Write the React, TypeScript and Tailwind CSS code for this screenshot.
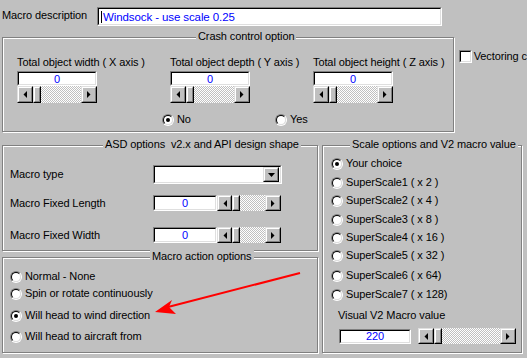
import React from "react";

const Sunken = ({ className, children }: { className: string; children?: React.ReactNode }) => (
  <div className={`border border-t-[#808080] border-l-[#808080] border-b-white border-r-white ${className}`}>
    <div className="h-full w-full border border-t-black border-l-black border-b-[#dfdfdf] border-r-[#dfdfdf] bg-white flex items-center overflow-hidden">
      {children}
    </div>
  </div>
);

const Raised = ({ className, children }: { className: string; children?: React.ReactNode }) => (
  <div className={`border border-t-[#dfdfdf] border-l-[#dfdfdf] border-b-black border-r-black ${className}`}>
    <div className="h-full w-full border border-t-white border-l-white border-b-[#808080] border-r-[#808080] bg-[#c0c0c0] flex items-center justify-center">
      {children}
    </div>
  </div>
);

const Tri = ({ dir }: { dir: "l" | "r" | "d" }) => {
  if (dir === "l")
    return (
      <svg width="4" height="7" viewBox="0 0 4 7">
        <polygon points="4,0 4,7 0.5,3.5" fill="#000" />
      </svg>
    );
  if (dir === "r")
    return (
      <svg width="4" height="7" viewBox="0 0 4 7">
        <polygon points="0,0 0,7 3.5,3.5" fill="#000" />
      </svg>
    );
  return (
    <svg width="7" height="4" viewBox="0 0 7 4">
      <polygon points="0,0 7,0 3.5,4" fill="#000" />
    </svg>
  );
};

const Scroll = ({ className, lw, rw }: { className: string; lw: string; rw: string }) => (
  <div className={`flex ${className}`}>
    <Raised className={`${lw} h-full`}>
      <Tri dir="l" />
    </Raised>
    <Raised className="w-[8px] h-full" />
    <div className="flex-1 h-full bg-[image:repeating-conic-gradient(#c0c0c0_0_25%,#ffffff_0_50%)] bg-[length:2px_2px]" />
    <Raised className={`${rw} h-full`}>
      <Tri dir="r" />
    </Raised>
  </div>
);

const Radio = ({ checked, label }: { checked?: boolean; label: string }) => (
  <div className="flex items-center h-[13px]">
    <div className="w-[12px] h-[12px] rounded-full border border-t-[#808080] border-l-[#808080] border-b-white border-r-white shrink-0">
      <div className="w-full h-full rounded-full border border-t-black border-l-black border-b-[#dfdfdf] border-r-[#dfdfdf] bg-white flex items-center justify-center">
        {checked && <div className="w-[4px] h-[4px] rounded-full bg-black" />}
      </div>
    </div>
    <span className="ml-[3px] whitespace-nowrap leading-[13px]">{label}</span>
  </div>
);

const Frame = ({
  className,
  title,
  titleLeft,
  children,
}: {
  className: string;
  title: string;
  titleLeft: string;
  children?: React.ReactNode;
}) => (
  <div className={`relative border border-[#808080] shadow-[inset_1px_1px_0_#fff,1px_1px_0_#fff] ${className}`}>
    <span className={`absolute top-[-8px] ${titleLeft} bg-[#c0c0c0] px-[2px] leading-[13px] whitespace-pre`}>{title}</span>
    {children}
  </div>
);

const Value = ({ className, v }: { className: string; v: string }) => (
  <Sunken className={className}>
    <span className="w-full text-center text-[#0000ff] leading-[12px]">{v}</span>
  </Sunken>
);

const AxisCol = ({ label, w }: { label: string; w: string }) => (
  <div className={`flex flex-col ${w}`}>
    <span className="leading-[13px] whitespace-nowrap">{label}</span>
    <Value className="mt-[2px] w-[80px] h-[15px]" v="0" />
    <Scroll className="w-[80px] h-[17px]" lw="w-[16px]" rw="w-[16px]" />
  </div>
);

export default function App() {
  return (
    <div
      className="relative w-[527px] h-[358px] bg-[#c0c0c0] overflow-hidden pt-[7px] text-[11px] tracking-[-0.1px] text-black"
      style={{ fontFamily: '"Liberation Sans", Arial, sans-serif' }}
    >
      {/* Row 1 */}
      <div className="flex items-start h-[19px]">
        <span className="ml-[2px] w-[95px] mt-[2px] leading-[13px]">Macro description</span>
        <Sunken className="w-[345px] h-[19px]">
          <div className="w-[1px] h-[12px] bg-black ml-[2px]" />
          <span className="ml-[1px] text-[#0000ff] text-[11.5px] leading-[14px] whitespace-nowrap">Windsock - use scale 0.25</span>
        </Sunken>
      </div>

      {/* Row 2 */}
      <div className="flex mt-[11px]">
        <Frame className="ml-[2px] w-[452px] h-[95px]" title="Crash control option" titleLeft="left-[193px]">
          <div className="pl-[14px] pt-[18px] flex">
            <AxisCol label="Total object width ( X axis )" w="w-[153px]" />
            <AxisCol label="Total object depth ( Y axis )" w="w-[143px]" />
            <AxisCol label="Total object height ( Z axis )" w="w-[120px]" />
          </div>
          <div className="flex mt-[10px] pl-[159px]">
            <div className="w-[113px]">
              <Radio checked label="No" />
            </div>
            <Radio label="Yes" />
          </div>
        </Frame>
        <div className="ml-[5px] mt-[13px] flex items-center h-[13px]">
          <div className="w-[13px] h-[13px] border border-t-[#808080] border-l-[#808080] border-b-white border-r-white shrink-0">
            <div className="w-full h-full border border-t-black border-l-black border-b-[#dfdfdf] border-r-[#dfdfdf] bg-white" />
          </div>
          <span className="ml-[2px] whitespace-nowrap leading-[13px]">Vectoring c</span>
        </div>
      </div>

      {/* Row 3 */}
      <div className="flex items-start mt-[13px]">
        <div className="ml-[2px] w-[316px] flex flex-col">
          <Frame
            className="w-[316px] h-[106px]"
            title="ASD options  v2.x and API design shape"
            titleLeft="left-[100px]"
          >
            <div className="pl-[7px] pt-[19px] flex flex-col">
              <div className="flex items-center h-[19px]">
                <span className="w-[143px] leading-[13px]">Macro type</span>
                <div className="w-[129px] h-[19px] border border-t-[#808080] border-l-[#808080] border-b-white border-r-white">
                  <div className="h-full w-full border border-t-black border-l-black border-b-[#dfdfdf] border-r-[#dfdfdf] bg-white flex justify-end items-center">
                    <Raised className="w-[16px] h-[15px] mr-[1px]">
                      <Tri dir="d" />
                    </Raised>
                  </div>
                </div>
              </div>
              <div className="flex items-center h-[16px] mt-[11px]">
                <span className="w-[143px] leading-[13px]">Macro Fixed Length</span>
                <Value className="w-[64px] h-[16px]" v="0" />
                <Scroll className="w-[64px] h-[16px]" lw="w-[15px]" rw="w-[16px]" />
              </div>
              <div className="flex items-center h-[16px] mt-[16px]">
                <span className="w-[143px] leading-[13px]">Macro Fixed Width</span>
                <Value className="w-[64px] h-[16px]" v="0" />
                <Scroll className="w-[64px] h-[16px]" lw="w-[15px]" rw="w-[16px]" />
              </div>
            </div>
          </Frame>
          <Frame className="mt-[6px] w-[316px] h-[96px]" title="Macro action options" titleLeft="left-[147px]">
            <div className="pl-[7px] pt-[12px] flex flex-col">
              <Radio label="Normal - None" />
              <div className="mt-[4px]">
                <Radio label="Spin or rotate continuously" />
              </div>
              <div className="mt-[9px]">
                <Radio checked label="Will head to wind direction" />
              </div>
              <div className="mt-[8px]">
                <Radio label="Will head to aircraft from" />
              </div>
            </div>
          </Frame>
        </div>
        <Frame
          className="ml-[4px] w-[200px] h-[208px]"
          title="Scale options and V2 macro value"
          titleLeft="left-[27px]"
        >
          <div className="pl-[8px] pt-[11px] flex flex-col">
            <Radio checked label="Your choice" />
            <div className="mt-[6px]">
              <Radio label="SuperScale1 ( x 2 )" />
            </div>
            <div className="mt-[5px]">
              <Radio label="SuperScale2 ( x 4 )" />
            </div>
            <div className="mt-[6px]">
              <Radio label="SuperScale3 ( x 8 )" />
            </div>
            <div className="mt-[5px]">
              <Radio label="SuperScale4 ( x 16 )" />
            </div>
            <div className="mt-[5px]">
              <Radio label="SuperScale5 ( x 32 )" />
            </div>
            <div className="mt-[7px]">
              <Radio label="SuperScale6 ( x 64)" />
            </div>
            <div className="mt-[6px]">
              <Radio label="SuperScale7 ( x 128)" />
            </div>
            <span className="ml-[7px] mt-[8px] leading-[13px] whitespace-nowrap">Visual V2 Macro value</span>
            <div className="flex items-center mt-[6px] ml-[8px]">
              <Value className="w-[72px] h-[15px]" v="220" />
              <Scroll className="ml-[7px] w-[98px] h-[16px]" lw="w-[16px]" rw="w-[16px]" />
            </div>
          </div>
        </Frame>
      </div>

      {/* Red arrow annotation */}
      <svg className="absolute top-0 left-0 pointer-events-none" width="527" height="358" viewBox="0 0 527 358">
        <line x1="300" y1="273" x2="168" y2="307" stroke="#ff0000" strokeWidth="2" />
        <polygon points="155,312 172,300 169,307 176,314" fill="#ff0000" />
      </svg>
    </div>
  );
}
